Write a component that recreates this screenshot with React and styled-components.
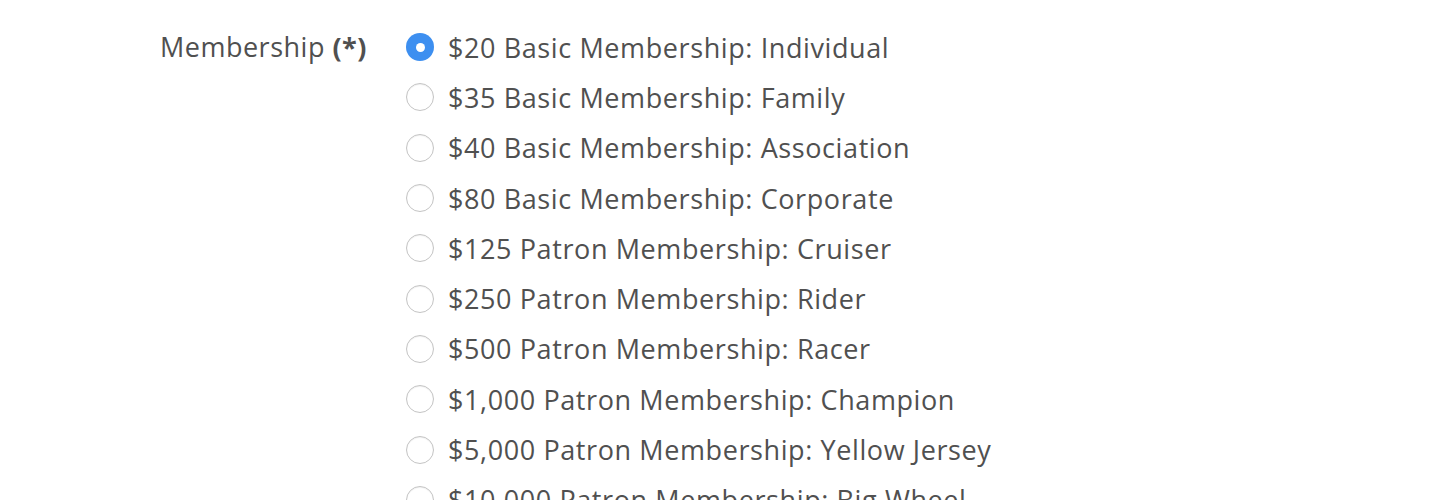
import React, { useState } from 'react';
import styled, { createGlobalStyle } from 'styled-components';

const Global = createGlobalStyle`
  body {
    margin: 0;
    background: #fff;
    font-family: "Open Sans", "Liberation Sans", sans-serif;
    color: #555;
  }
`;

const Form = styled.form`
  display: grid;
  grid-template-columns: 246px 1fr;
  padding: 22px 0 0 160px;
  height: 500px;
  box-sizing: border-box;
  overflow: hidden;
`;

const Label = styled.div`
  font-size: 27px;
  line-height: 50px;
  letter-spacing: 0.5px;
  color: #505050;
  b {
    font-weight: 700;
  }
`;

const Options = styled.div`
  display: flex;
  flex-direction: column;
`;

const Option = styled.label`
  display: flex;
  align-items: center;
  gap: 14px;
  height: 50.3px;
  font-size: 27px;
  letter-spacing: 0.6px;
  color: #505050;
  cursor: pointer;
`;

const Radio = styled.span`
  width: 28px;
  height: 28px;
  border-radius: 50%;
  box-sizing: border-box;
  flex: none;
  display: flex;
  align-items: center;
  justify-content: center;
  background: ${p => (p.$checked ? '#3d8ff0' : '#fff')};
  border: ${p => (p.$checked ? 'none' : '1.5px solid #c4c4c4')};
  box-shadow: ${p => (p.$checked ? 'none' : 'inset 0 1px 1px rgba(0,0,0,0.06)')};
  &::after {
    content: '';
    display: ${p => (p.$checked ? 'block' : 'none')};
    width: 9px;
    height: 9px;
    border-radius: 50%;
    background: #fff;
  }
`;

const plans = [
  '$20 Basic Membership: Individual',
  '$35 Basic Membership: Family',
  '$40 Basic Membership: Association',
  '$80 Basic Membership: Corporate',
  '$125 Patron Membership: Cruiser',
  '$250 Patron Membership: Rider',
  '$500 Patron Membership: Racer',
  '$1,000 Patron Membership: Champion',
  '$5,000 Patron Membership: Yellow Jersey',
  '$10,000 Patron Membership: Big Wheel',
];

export default function App() {
  const [selected, setSelected] = useState(0);
  return (
    <>
      <Global />
      <Form>
        <Label>
          Membership <b>(*)</b>
        </Label>
        <Options>
          {plans.map((plan, i) => (
            <Option key={plan} onClick={() => setSelected(i)}>
              <Radio $checked={selected === i} />
              {plan}
            </Option>
          ))}
        </Options>
      </Form>
    </>
  );
}
